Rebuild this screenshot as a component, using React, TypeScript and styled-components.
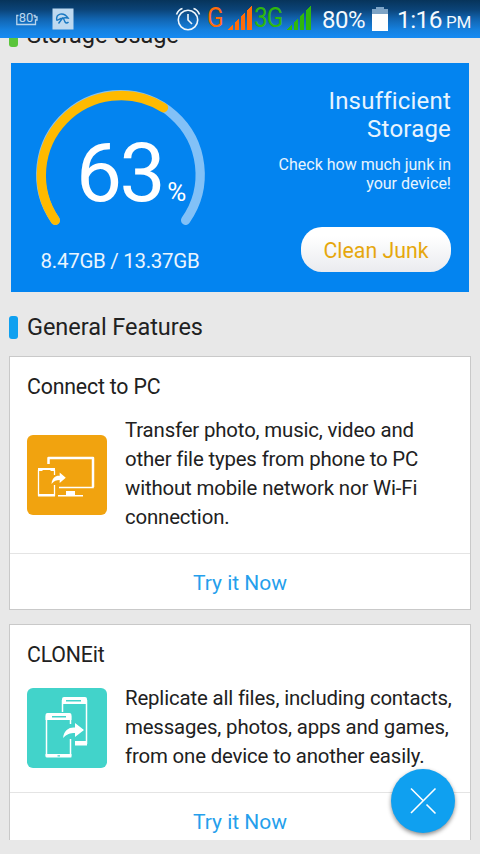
import React from "react";
import styled, { createGlobalStyle } from "styled-components";

const Global = createGlobalStyle`
  * { box-sizing: border-box; }
  body { margin: 0; background: #e8e8e8; font-family: Roboto, "Liberation Sans", sans-serif; color: #212121; }
`;

const Screen = styled.div`
  position: relative;
  width: 480px;
  height: 854px;
  overflow: hidden;
  display: flex;
  flex-direction: column;
  background: #e8e8e8;
`;

const StatusBar = styled.header`
  flex: none;
  display: flex;
  align-items: center;
  height: 38px;
  padding: 0 10px 0 15px;
  background: linear-gradient(#07345a 0%, #0b4377 25%, #1164b0 50%, #1580de 78%, #168bf3 100%);
  color: #eef5fb;
`;

const StatusIcon = styled.svg<{ $gap?: number; $drop?: number }>`
  flex: none;
  display: block;
  margin-left: ${(p) => p.$gap ?? 0}px;
  margin-top: ${(p) => p.$drop ?? 0}px;
`;

const Spacer = styled.div`
  flex: 1;
`;

const StatusText = styled.span<{ $size: number; $width: number; $gap: number; $drop?: number; $spacing?: number }>`
  flex: none;
  width: ${(p) => p.$width}px;
  margin-left: ${(p) => p.$gap}px;
  margin-top: ${(p) => p.$drop ?? 0}px;
  font-size: ${(p) => p.$size}px;
  line-height: 28px;
  letter-spacing: ${(p) => p.$spacing ?? 0}px;
  color: #f4f9fd;
  white-space: nowrap;
`;

const NetworkText = styled(StatusText)<{ $tone: string }>`
  color: ${(p) => p.$tone};
  transform: scaleX(0.9);
  transform-origin: left center;
`;

const Content = styled.main`
  flex: none;
  height: 802px;
  overflow: hidden;
  display: flex;
  flex-direction: column;
  padding: 0 9px;
`;

const SectionTitle = styled.h2<{ $top: number; $bottom: number; $accent: string }>`
  flex: none;
  display: flex;
  align-items: center;
  gap: 9px;
  height: 28px;
  margin: ${(p) => p.$top}px 0 ${(p) => p.$bottom}px;
  font-size: 23.5px;
  font-weight: 400;
  line-height: 28px;
  letter-spacing: -0.05px;
  white-space: nowrap;
  &::before {
    content: "";
    width: 9px;
    height: 23px;
    border-radius: 3px;
    background: ${(p) => p.$accent};
  }
`;

const StoragePanel = styled.section`
  flex: none;
  display: flex;
  justify-content: space-between;
  height: 229px;
  margin: 0 2px;
  padding: 23px 18px 20px 21px;
  background: #0384f0;
  color: #fff;
`;

const Usage = styled.div`
  display: flex;
  flex-direction: column;
  align-items: center;
  width: 176px;
`;

const Gauge = styled.div`
  display: grid;
  width: 176px;
  height: 144px;
  > * { grid-area: 1 / 1; }
`;

const Percent = styled.div`
  display: flex;
  align-items: baseline;
  padding: 40px 0 0 44px;
  font-size: 82px;
  line-height: 94px;
  letter-spacing: -2.5px;
`;

const PercentSign = styled.span`
  margin-left: 4px;
  font-size: 26px;
  letter-spacing: 0;
`;

const Capacity = styled.div`
  margin-top: 18px;
  font-size: 20.5px;
  line-height: 26px;
  letter-spacing: -0.3px;
  color: #eaf5fe;
  white-space: nowrap;
`;

const Advice = styled.div`
  display: flex;
  flex-direction: column;
  align-items: flex-end;
  padding-top: 1px;
  text-align: right;
  color: #e8f4fe;
`;

const AdviceTitle = styled.div`
  font-size: 24px;
  line-height: 28px;
  letter-spacing: 0.2px;
`;

const AdviceText = styled.div`
  margin-top: 12px;
  font-size: 16px;
  line-height: 19px;
  letter-spacing: 0;
`;

const CleanButton = styled.button`
  width: 150px;
  height: 45px;
  margin-top: auto;
  padding: 2px 0 0;
  border: 0;
  border-radius: 21px;
  background: linear-gradient(#ffffff 20%, #eaebef);
  color: #e6a70d;
  font: 400 21.3px/26px Roboto, "Liberation Sans", sans-serif;
`;

const Card = styled.article<{ $height: number }>`
  flex: none;
  display: flex;
  flex-direction: column;
  height: ${(p) => p.$height}px;
  margin-bottom: 14px;
  border: 1px solid #c9c9c9;
  background: #fff;
`;

const CardTitle = styled.h3`
  margin: 17px 17px 15px;
  font-size: 21.3px;
  font-weight: 400;
  line-height: 26px;
  letter-spacing: -0.18px;
`;

const CardBody = styled.div`
  flex: 1;
  display: flex;
  align-items: flex-start;
  gap: 18px;
  padding-left: 17px;
`;

const FeatureIcon = styled.svg<{ $top: number; $color: string }>`
  flex: none;
  width: 80px;
  height: 80px;
  margin-top: ${(p) => p.$top}px;
  border-radius: 6px;
  background: ${(p) => p.$color};
`;

const Description = styled.p`
  margin: 1px 0 0;
  font-size: 20.4px;
  line-height: 29px;
  letter-spacing: -0.16px;
  white-space: nowrap;
`;

const CardAction = styled.button`
  height: 56px;
  padding: 2px 0 0;
  border: 0;
  border-top: 1px solid #e4e4e4;
  background: #fff;
  color: #259fec;
  font: 400 21px/28px Roboto, "Liberation Sans", sans-serif;
`;

const FloatingButton = styled.button`
  position: absolute;
  left: 391px;
  top: 769px;
  width: 64px;
  height: 64px;
  padding: 0;
  border: 0;
  border-radius: 50%;
  background: #0fa0f0;
  box-shadow: 0 2px 4px rgba(0, 0, 0, 0.45);
`;

const Signal = ({ color }: { color: string }) => (
  <StatusIcon $gap={5} $drop={-2} width="24" height="24" viewBox="0 0 24 24" fill={color} shapeRendering="crispEdges">
    <path d="M0 23.5 5 18.5V23.5ZM7 16.5 11 12.5V23.5H7ZM13 10.5 17 6.5V23.5H13ZM19 4.500 24 0V23.500H19Z" />
  </StatusIcon>
);

const FeatureArrow = () => (
  <path fill="#fff" stroke="none" d="M0 13C1 5 6 2 12 2.500V-2L21 5L12 12V8C7 8 4 9 0 13Z" />
);

const features = [
  {
    title: "Connect to PC",
    height: 254,
    color: "#f1a30f",
    iconTop: 20,
    lines: [
      "Transfer photo, music, video and",
      "other file types from phone to PC",
      "without mobile network nor Wi-Fi",
      "connection.",
    ],
    art: (
      <g fill="none" stroke="#fff">
        <path strokeWidth="2.500" strokeLinejoin="round" d="M21.500 29V23H66V52" />
        <path strokeWidth="1.600" d="M66 51V52.500H32" />
        <path strokeWidth="1.300" d="M11.500 35V60H27.500V50M27.500 40V35" />
        <path fill="#fff" stroke="none" d="M11 33H28V36H24L23 35H16L15 36H11ZM11 59H28V61.500H11ZM39 56H48V60H56V61.500H31V60H39Z" />
        <g transform="translate(24.500 39) scale(.68 .76)">
          <FeatureArrow />
        </g>
      </g>
    ),
  },
  {
    title: "CLONEit",
    height: 225,
    color: "#42d3ca",
    iconTop: 5,
    lines: [
      "Replicate all files, including contacts,",
      "messages, photos, apps and games,",
      "from one device to another easily.",
    ],
    art: (
      <g fill="none" stroke="#fff">
        <path strokeWidth="1.500" d="M35.500 24V12M59.500 12V56M19.500 28V68M43.500 28V36M43.500 51V68" />
        <path fill="#fff" stroke="none" fillRule="evenodd" d="M35 16V11Q35 9 37 9H58Q60 9 60 11V16ZM39 12V13.500H54V12ZM48 53H60V57.500H48ZM18.500 32V27Q18.500 25 20.500 25H42.500Q44.500 25 44.500 27V32ZM25 28V29.500H39V28ZM18.500 66H44.500V69Q44.500 69.500 43 69.500H20Q18.500 69.500 18.500 68.500ZM30.500 67.200V68.400H33V67.200Z" />
        <g transform="translate(36 37)">
          <FeatureArrow />
        </g>
      </g>
    ),
  },
];

export default function App() {
  return (
    <Screen>
      <Global />
      <StatusBar>
        <StatusIcon width="23" height="18" viewBox="0 0 23 18" $drop={-2}>
          <path d="M3.500 6.500H1.800V15.500H20.500V11H22V8H20V6.500H18.500" fill="none" stroke="#b9d5ed" strokeWidth="1.300" />
          <text x="3.800" y="13" fontSize="13" fontFamily="Roboto, sans-serif" fill="#b9d5ed">80</text>
        </StatusIcon>
        <StatusIcon $gap={14} width="22" height="22" viewBox="0 0 22 22">
          <rect x=".5" y=".5" width="21" height="21" fill="#bed9f0" />
          <path d="M4.800 12.500C3.500 5.500 11.500 3.500 16 10C13 9.500 9 9.500 4.800 12.500M11 9.500 6.500 15.500M11.500 10.500 13 14Q14.500 16 16.500 14" fill="none" stroke="#1978c2" strokeWidth="1.400" />
        </StatusIcon>
        <Spacer />
        <StatusIcon width="26" height="24" viewBox="0 0 26 24" fill="none" stroke="#f1f7fc" strokeWidth="1.600">
          <circle cx="13" cy="13" r="9.700" />
          <path d="M13 7V13L17 17M1.500 7.500Q3.500 2.500 7.500 1.500M24.500 7.500Q22.500 2.500 18.500 1.500" />
        </StatusIcon>
        <NetworkText $size={27} $width={16} $gap={6} $drop={-2} $tone="#ff6c0a">G</NetworkText>
        <Signal color="#ff6c0a" />
        <NetworkText $size={27} $width={28} $gap={2} $drop={-2} $tone="#2fb70d" $spacing={-1}>3G</NetworkText>
        <Signal color="#2fb70d" />
        <StatusText $size={24} $width={45} $gap={11} $drop={2} $spacing={-0.5}>80%</StatusText>
        <StatusIcon $gap={5} width="16" height="24" viewBox="0 0 16 24">
          <path d="M0 2H4V0H12V2H16V7H0Z" fill="#7ea4c6" />
          <path d="M0 7H16V24H0Z" fill="#fff" />
        </StatusIcon>
        <StatusText $size={24.5} $width={45} $gap={9} $drop={2} $spacing={-0.6}>1:16</StatusText>
        <StatusText $size={17} $width={24} $gap={4} $drop={6} $spacing={-0.3}>PM</StatusText>
      </StatusBar>
      <Content>
        <SectionTitle $top={-17} $bottom={14} $accent="#5ac53b">Storage Usage</SectionTitle>
        <StoragePanel>
          <Usage>
            <Gauge>
              <svg width="176" height="144" viewBox="0 0 176 144" fill="none" strokeWidth="9.300" strokeLinecap="round">
                <path d="M23.300 134.300A79.700 79.700 0 1 1 153.600 134.300" stroke="#82c1f7" />
                <path d="M23.300 134.300A79.700 79.700 0 0 1 131.500 21.800" stroke="#ffba00" />
              </svg>
              <Percent>
                63<PercentSign>%</PercentSign>
              </Percent>
            </Gauge>
            <Capacity>8.47GB / 13.37GB</Capacity>
          </Usage>
          <Advice>
            <AdviceTitle>Insufficient<br />Storage</AdviceTitle>
            <AdviceText>Check how much junk in<br />your device!</AdviceText>
            <CleanButton>Clean Junk</CleanButton>
          </Advice>
        </StoragePanel>
        <SectionTitle $top={21} $bottom={15} $accent="#0fa0f0">General Features</SectionTitle>
        {features.map((f) => (
          <Card key={f.title} $height={f.height}>
            <CardTitle>{f.title}</CardTitle>
            <CardBody>
              <FeatureIcon viewBox="0 0 80 80" $top={f.iconTop} $color={f.color}>{f.art}</FeatureIcon>
              <Description>
                {f.lines.map((line) => (
                  <React.Fragment key={line}>{line}<br /></React.Fragment>
                ))}
              </Description>
            </CardBody>
            <CardAction>Try it Now</CardAction>
          </Card>
        ))}
      </Content>
      <FloatingButton aria-label="Close">
        <svg width="64" height="64" viewBox="0 0 64 64" fill="none" stroke="#fff" strokeWidth="1.600">
          <path d="M20 44 44.500 19.500M20 19.500 32 31.500M35.500 35.500 44.500 44.500" />
        </svg>
      </FloatingButton>
    </Screen>
  );
}
